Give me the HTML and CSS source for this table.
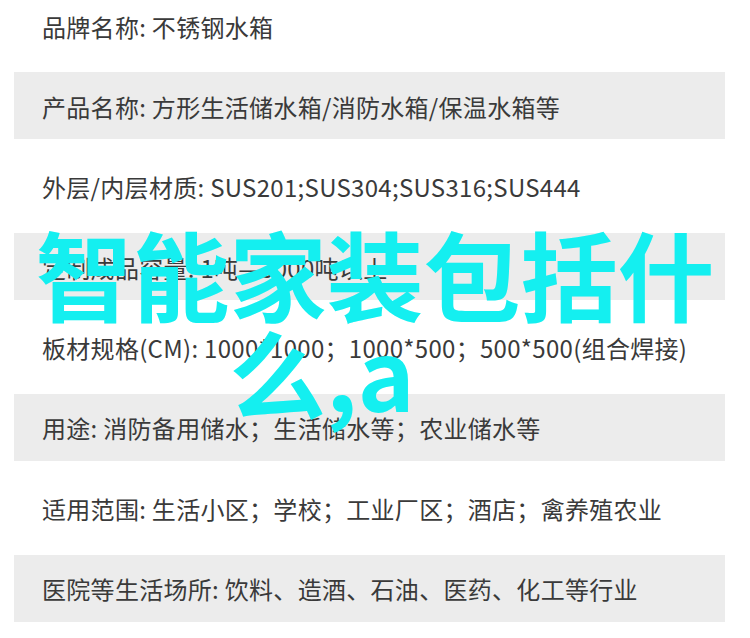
FILE: index.html
```html
<!DOCTYPE html>
<html>
<head>
<meta name="viewport" content="width=device-width, initial-scale=1">
<link rel="stylesheet" href="styles.css">
</head>
<body>

<div class="spec-list">
  <div class="spec-row">品牌名称: 不锈钢水箱</div>
  <div class="spec-row shade">产品名称: 方形生活储水箱/消防水箱/保温水箱等</div>
  <div class="spec-row">外层/内层材质: SUS201;SUS304;SUS316;SUS444</div>
  <div class="spec-row shade">定制成品容量: 1吨—3000吨以上</div>
  <div class="spec-row">板材规格(CM): 1000*1000；1000*500；500*500(组合焊接)</div>
  <div class="spec-row shade">用途: 消防备用储水；生活储水等；农业储水等</div>
  <div class="spec-row">适用范围: 生活小区；学校；工业厂区；酒店；禽养殖农业</div>
  <div class="spec-row shade">医院等生活场所: 饮料、造酒、石油、医药、化工等行业</div>
</div>

<!-- title stamped over the list -->
<div class="title-overlay">
  <span class="line">智能家装包括什</span>
  <span class="line second">么,a</span>
</div>

</body>
</html>
```

FILE: styles.css
```css
body {
  margin: 0;
  background: #fff;
  font-family: "Noto Sans CJK SC", "Noto Sans", sans-serif;
  color: #3a3a3a;
}

.spec-list {
  width: 711px;
  margin-left: 14px;
  margin-top: -8px;
}

.spec-row {
  height: 67px;
  margin-bottom: 13.4px;
  padding-top: 1px;
  padding-left: 28px;
  box-sizing: border-box;
  display: flex;
  align-items: center;
  font-size: 24px;
  letter-spacing: 0.3px;
  white-space: nowrap;
}

.spec-row.shade {
  background: #ececec;
}

.title-overlay {
  position: absolute;
  left: 0;
  top: 223px;
  width: 750px;
  text-align: center;
  font-size: 97px;
  font-weight: 700;
  line-height: 98px;
  color: #14eff0;
}

.title-overlay .line {
  display: block;
}

.title-overlay .second {
  padding-right: 106px;
}
```
